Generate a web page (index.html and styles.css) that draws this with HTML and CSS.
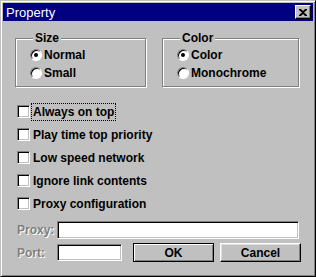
FILE: index.html
```html
<!DOCTYPE html>
<html lang="en">
<head>
    <meta charset="UTF-8">
    <title>Property</title>
    <link rel="stylesheet" href="styles.css">
</head>
<body>
    <div class="window">
        <div class="titlebar">
            <span class="title">Property</span>
            <span class="close-btn">
                <svg width="8" height="7" viewBox="0 0 8 7"><path d="M0 0h2l2 2 2-2h2v1L5 3.5 8 6v1H6L4 5 2 7H0V6l3-2.5L0 1z" fill="#000"/></svg>
            </span>
        </div>
        <div class="content">
            <div class="groups">
                <fieldset class="group group-size">
                    <legend>Size</legend>
                    <div class="radio-row"><span class="radio checked"></span>Normal</div>
                    <div class="radio-row"><span class="radio"></span>Small</div>
                </fieldset>
                <fieldset class="group group-color">
                    <legend>Color</legend>
                    <div class="radio-row"><span class="radio checked"></span>Color</div>
                    <div class="radio-row"><span class="radio"></span>Monochrome</div>
                </fieldset>
            </div>
            <div class="checks">
                <div class="check-row"><span class="checkbox"></span><span class="focus">Always on top</span></div>
                <div class="check-row"><span class="checkbox"></span><span>Play time top priority</span></div>
                <div class="check-row"><span class="checkbox"></span><span>Low speed network</span></div>
                <div class="check-row"><span class="checkbox"></span><span>Ignore link contents</span></div>
                <div class="check-row"><span class="checkbox"></span><span>Proxy configuration</span></div>
            </div>
            <div class="proxy-row">
                <span class="disabled">Proxy:</span>
                <span class="field field-proxy"></span>
            </div>
            <div class="port-row">
                <span class="disabled">Port:</span>
                <span class="field field-port"></span>
                <span class="button default">OK</span>
                <span class="button">Cancel</span>
            </div>
        </div>
    </div>
</body>
</html>
```
FILE: styles.css
```css
body {
    margin: 0;
    font-family: "Liberation Sans", Arial, sans-serif;
    font-size: 12px;
    font-weight: bold;
    color: #000;
    background: #c0c0c0;
}

.window {
    width: 316px;
    height: 277px;
    box-sizing: border-box;
    background: #c0c0c0;
    border: 1px solid;
    border-color: #c0c0c0 #000 #000 #c0c0c0;
    box-shadow: inset 1px 1px 0 #fff, inset -1px -1px 0 #808080;
    padding: 2px;
}

.titlebar {
    height: 18px;
    background: #000080;
    display: flex;
    align-items: center;
    justify-content: space-between;
    padding: 0 2px 0 3px;
}

.title {
    color: #fff;
    font-weight: normal;
    font-size: 13px;
}

.close-btn {
    width: 16px;
    height: 14px;
    box-sizing: border-box;
    background: #c0c0c0;
    border: 1px solid;
    border-color: #fff #000 #000 #fff;
    box-shadow: inset -1px -1px 0 #808080;
    display: flex;
    align-items: center;
    justify-content: center;
}

.content {
    padding: 10px 0 0 12px;
}

.groups {
    display: flex;
    gap: 16px;
}

.group {
    margin: 0;
    padding: 1px 0 0 14px;
    border: 1px solid #808080;
    box-shadow: inset 1px 1px 0 #fff, 1px 1px 0 #fff;
    height: 56px;
    box-sizing: border-box;
}

.group-size {
    width: 131px;
}

.group-color {
    width: 137px;
}

.group legend {
    padding: 0 2px;
    margin-left: 3px;
    background: #c0c0c0;
    line-height: 14px;
}

.radio-row {
    display: flex;
    align-items: center;
    height: 18px;
    gap: 2px;
}

.radio {
    width: 12px;
    height: 12px;
    box-sizing: border-box;
    border-radius: 50%;
    background: #fff;
    border: 1px solid;
    border-color: #808080 #fff #fff #808080;
    box-shadow: inset 1px 1px 0 #000;
    display: flex;
    align-items: center;
    justify-content: center;
}

.radio.checked::after {
    content: "";
    width: 4px;
    height: 4px;
    border-radius: 50%;
    background: #000;
}

.checks {
    margin-top: 13px;
    padding-left: 2px;
}

.check-row {
    display: flex;
    align-items: center;
    height: 23px;
    gap: 2px;
}

.checkbox {
    width: 13px;
    height: 13px;
    box-sizing: border-box;
    background: #fff;
    border: 1px solid;
    border-color: #808080 #fff #fff #808080;
    box-shadow: inset 1px 1px 0 #000, inset -1px -1px 0 #c0c0c0;
}

.focus {
    outline: 1px dotted #000;
    outline-offset: 0;
}

.check-row span + span {
    padding: 1px 1px;
}

.proxy-row, .port-row {
    display: flex;
    align-items: center;
    padding-left: 2px;
}

.proxy-row {
    margin-top: 6px;
    height: 18px;
}

.port-row {
    margin-top: 4px;
    height: 19px;
}

.disabled {
    width: 40px;
    color: #808080;
    text-shadow: 1px 1px 0 #fff;
}

.field {
    height: 18px;
    box-sizing: border-box;
    background: #fff;
    border: 1px solid;
    border-color: #808080 #fff #fff #808080;
    box-shadow: inset 1px 1px 0 #000, inset -1px -1px 0 #c0c0c0;
}

.field-proxy {
    width: 242px;
}

.field-port {
    width: 65px;
    height: 17px;
    margin-right: 11px;
}

.button {
    width: 81px;
    height: 19px;
    box-sizing: border-box;
    display: flex;
    align-items: center;
    justify-content: center;
    background: #c0c0c0;
    border: 1px solid;
    border-color: #fff #000 #000 #fff;
    box-shadow: inset -1px -1px 0 #808080, inset 1px 1px 0 #dfdfdf;
    margin-right: 6px;
}

.button.default {
    border-color: #000;
    box-shadow: inset 1px 1px 0 #fff, inset -1px -1px 0 #808080;
}
```
